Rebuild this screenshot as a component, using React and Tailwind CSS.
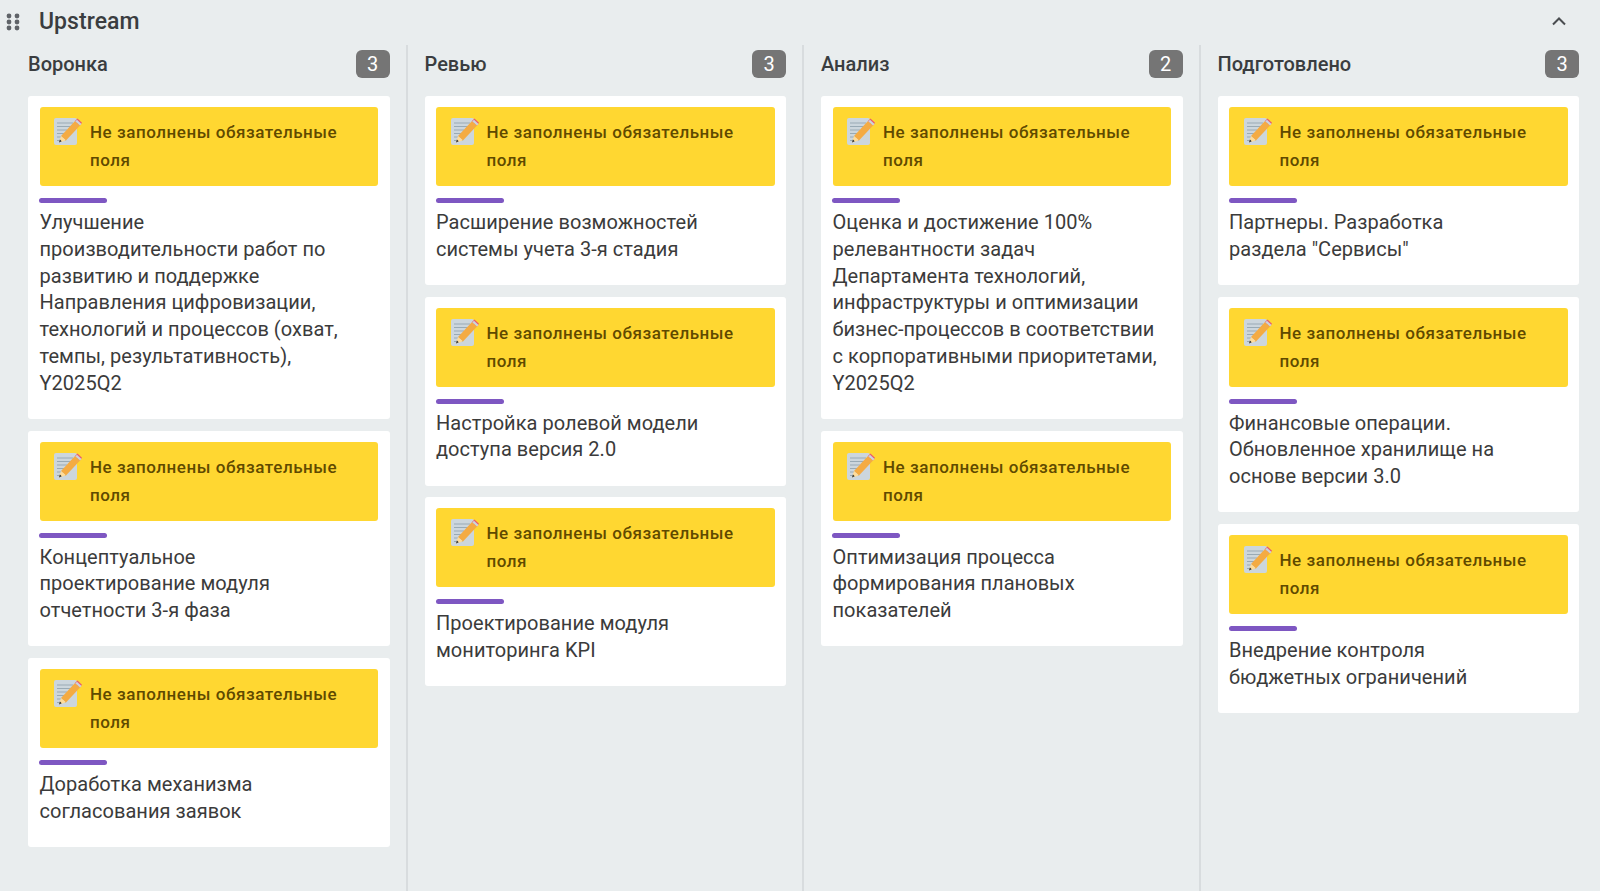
const columns = [
  { title: "Воронка", count: 3, cards: [
    ["Улучшение", "производительности работ по", "развитию и поддержке", "Направления цифровизации,", "технологий и процессов (охват,", "темпы, результативность),", "Y2025Q2"],
    ["Концептуальное", "проектирование модуля", "отчетности 3-я фаза"],
    ["Доработка механизма", "согласования заявок"],
  ]},
  { title: "Ревью", count: 3, cards: [
    ["Расширение возможностей", "системы учета 3-я стадия"],
    ["Настройка ролевой модели", "доступа версия 2.0"],
    ["Проектирование модуля", "мониторинга KPI"],
  ]},
  { title: "Анализ", count: 2, cards: [
    ["Оценка и достижение 100%", "релевантности задач", "Департамента технологий,", "инфраструктуры и оптимизации", "бизнес-процессов в соответствии", "с корпоративными приоритетами,", "Y2025Q2"],
    ["Оптимизация процесса", "формирования плановых", "показателей"],
  ]},
  { title: "Подготовлено", count: 3, cards: [
    ["Партнеры. Разработка", "раздела \"Сервисы\""],
    ["Финансовые операции.", "Обновленное хранилище на", "основе версии 3.0"],
    ["Внедрение контроля", "бюджетных ограничений"],
  ]},
];

function Memo() {
  return (
    <svg width="30" height="30" viewBox="0 0 30 30" className="shrink-0 -mt-[3px] -ml-[0.5px]">
      <rect x="1" y="3" width="23" height="27" rx="2" fill="#ccd6dd" />
      <g stroke="#99aab5" strokeWidth="1.2">
        <path d="M4 8h16M4 11.5h14M4 15h10M4 18.5h8M4 22h7M4 25.5h9" />
      </g>
      <path d="M8 21 L22 6 L27 10.5 L13 25.5 Z" fill="#f4ab43" />
      <path d="M22 6 L24.5 3.4 L29 7.8 L27 10.5 Z" fill="#ea596e" />
      <path d="M24 4.8 L28.5 9 L27 10.5 L22.4 6.3 Z" fill="#ccd6dd" />
      <path d="M8 21 L13 25.5 L6 27.5 Z" fill="#ffdc9a" />
      <path d="M6.9 24.6 L8.7 26.3 L6 27.5 Z" fill="#292f33" />
    </svg>
  );
}

function Card({ lines }) {
  return (
    <div className="bg-white rounded-[3px] pt-[11px] px-[11.5px] pb-[22.5px]">
      <div className="h-[79px] bg-[#ffd731] rounded-[3px] pl-[14px] pr-2 pt-[11px] flex items-start gap-[7px]">
        <Memo />
        <div className="text-[17px] leading-[28px] font-medium tracking-[0.55px] text-[#5f4a00]">
          Не заполнены обязательные<br />поля
        </div>
      </div>
      <div className="mt-[12px] -ml-[0.5px] w-[68px] h-[5px] rounded-full bg-[#7e57c2]" />
      <div className="mt-[6px] text-[20px] leading-[26.8px] tracking-[0.04px] text-[#3b3b3b]">
        {lines.map((l, i) => <div key={i} className="whitespace-nowrap">{l}</div>)}
      </div>
    </div>
  );
}

export default function App() {
  return (
    <div className="w-[1600px] h-[891px] overflow-hidden bg-[#e9edee] flex flex-col font-['Roboto',sans-serif]">
      <header className="h-[45px] shrink-0 flex items-center pl-[6px] pr-[33px]">
        <svg width="14" height="18" viewBox="0 0 14 18" fill="#5f6368" className="shrink-0 -mt-[2px]">
          <circle cx="3" cy="3" r="2.4" /><circle cx="11" cy="3" r="2.4" />
          <circle cx="3" cy="9" r="2.4" /><circle cx="11" cy="9" r="2.4" />
          <circle cx="3" cy="15" r="2.4" /><circle cx="11" cy="15" r="2.4" />
        </svg>
        <div className="ml-[19px] -mt-[1px] text-[23px] tracking-[0.05px] font-medium text-[#3a3d40] flex-1">Upstream</div>
        <svg width="16" height="10" viewBox="0 0 16 10" fill="none" stroke="#4a4d50" strokeWidth="2" className="-mt-[3px]">
          <path d="M2 8.5 L8 2.5 L14 8.5" />
        </svg>
      </header>
      <div className="flex-1 flex pl-[28px]">
        {columns.map((c, i) => (
          <div key={c.title} className={i < 3 ? "w-[396.5px] shrink-0 flex" : "w-[361.5px] shrink-0 flex"}>
            <div className="w-[361.5px] shrink-0">
              <div className="h-[51px] flex items-start justify-between pt-[5px]">
                <span className="text-[20px] font-medium leading-[28px] text-[#3a3d40]">{c.title}</span>
                <span className="w-[34px] h-[28px] rounded-[6px] bg-[#757575] text-white text-[20px] leading-[28px] text-center">{c.count}</span>
              </div>
              <div className="flex flex-col gap-[11.5px]">
                {c.cards.map((lines, j) => <Card key={j} lines={lines} />)}
              </div>
            </div>
            {i < 3 && <div className="ml-[16px] w-[2px] shrink-0 bg-[#d8dcde]" />}
          </div>
        ))}
      </div>
    </div>
  );
}
